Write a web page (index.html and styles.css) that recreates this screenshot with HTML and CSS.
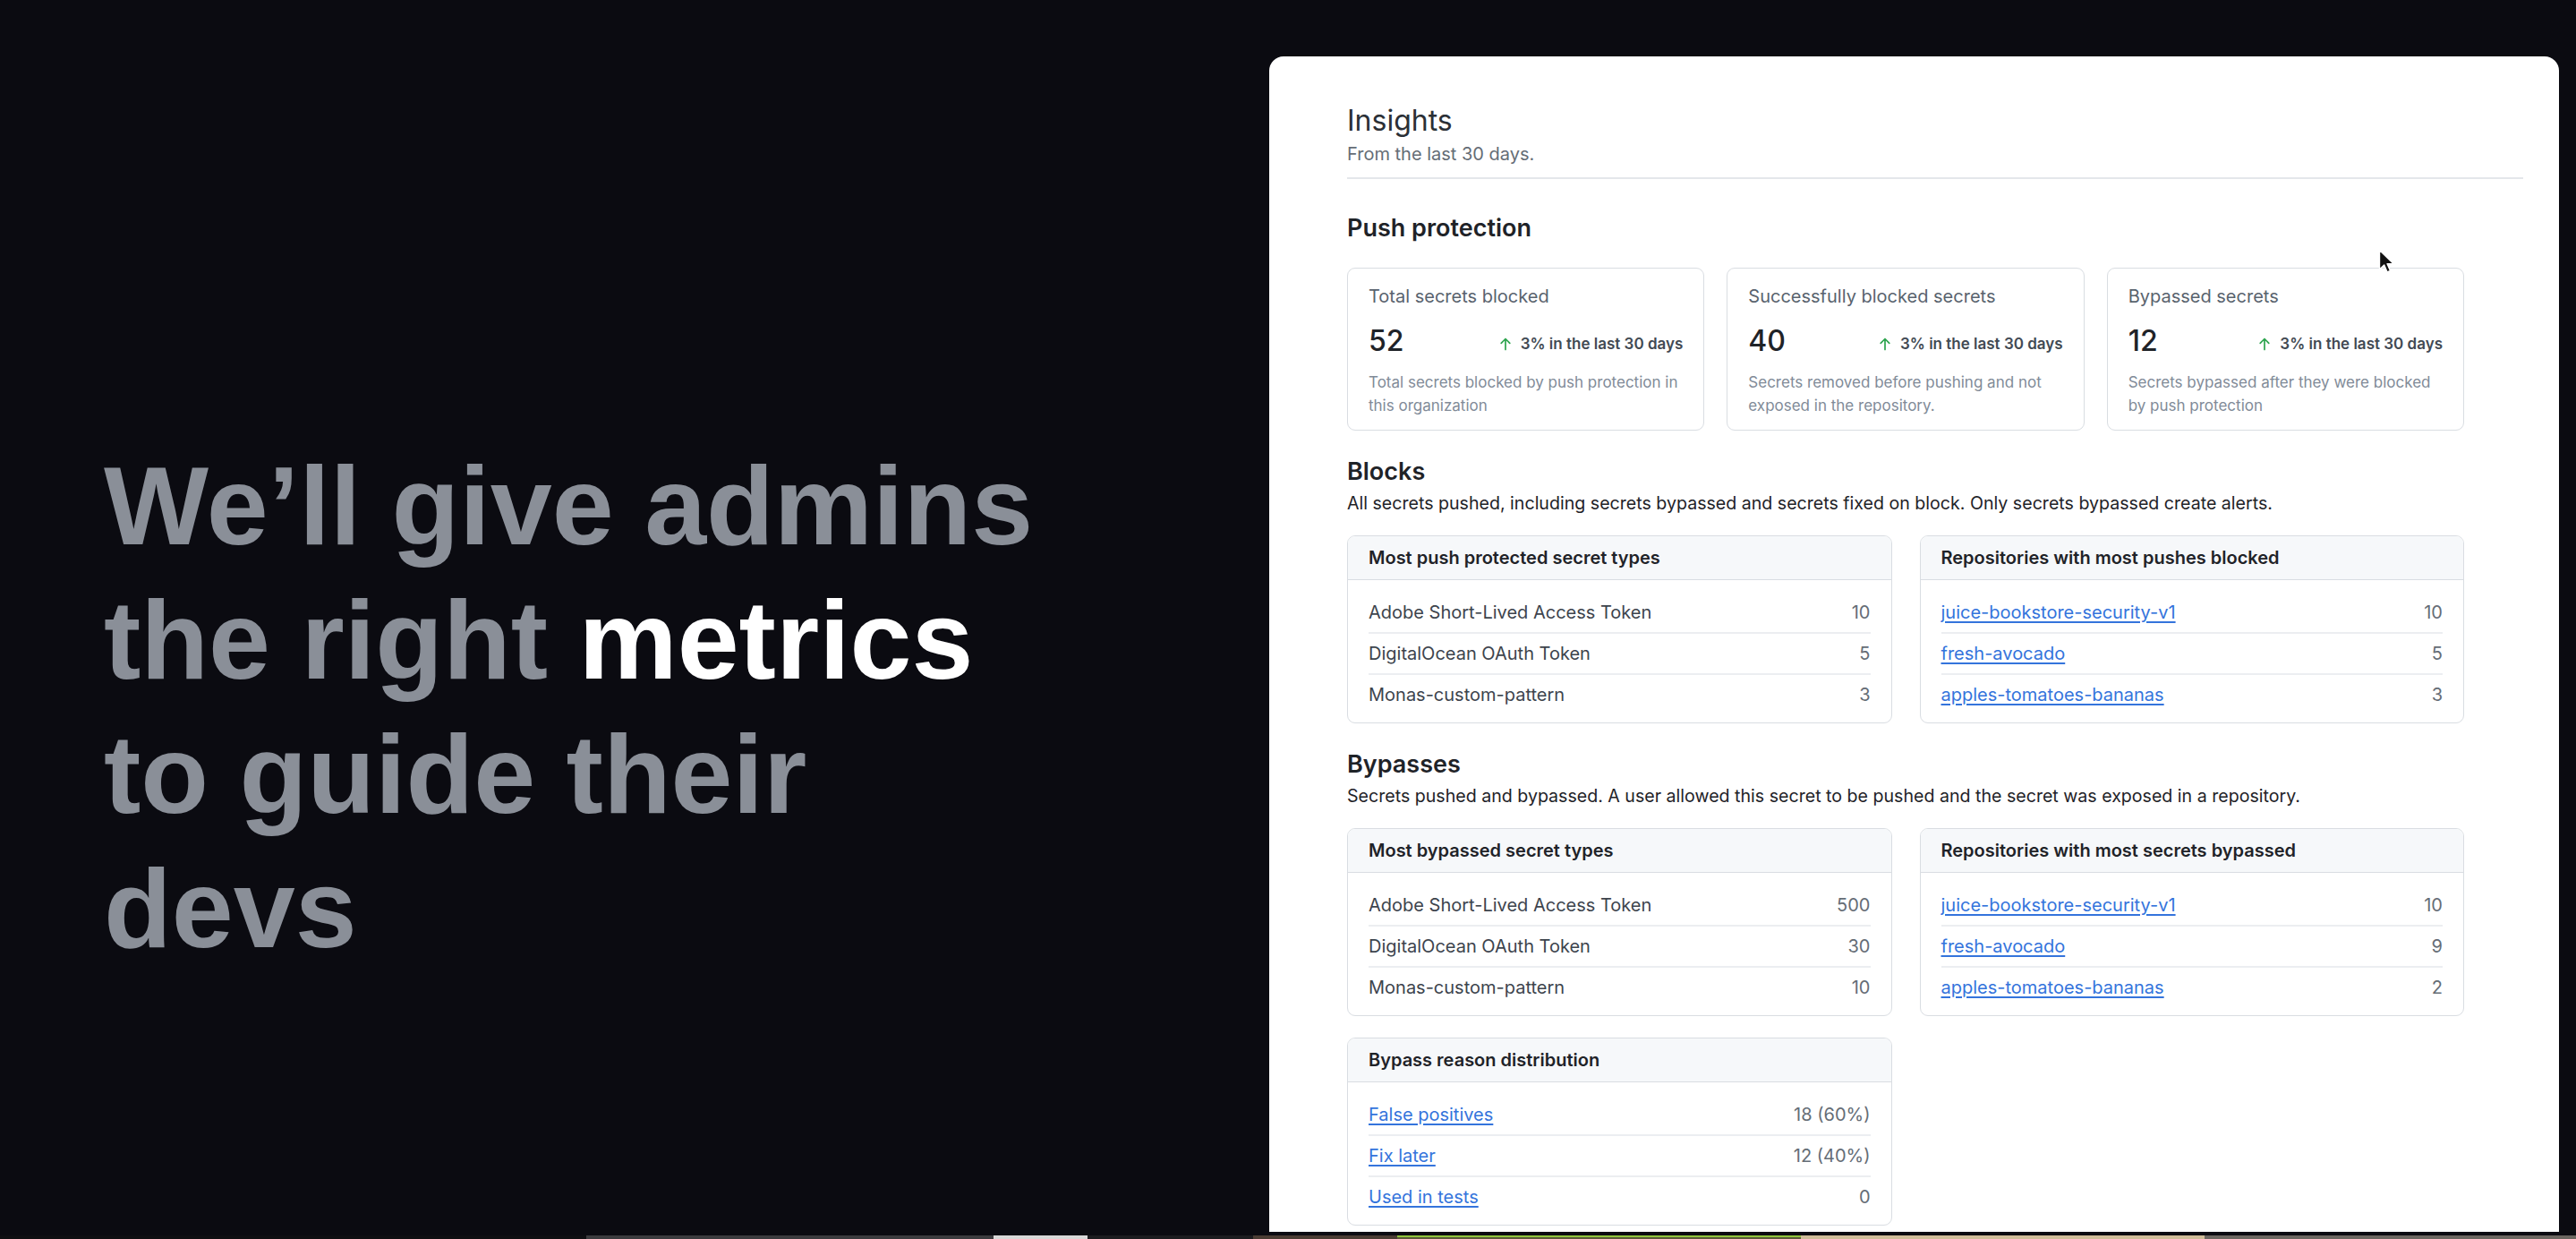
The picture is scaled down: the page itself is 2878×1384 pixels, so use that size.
FILE: index.html
```html
<!DOCTYPE html>
<html lang="en">
<head>
  <meta charset="UTF-8">
  <meta name="viewport" content="width=device-width, initial-scale=1.0">
  <title>Secret scanning insights</title>
  <link rel="stylesheet" href="styles.css">
</head>
<body>
  <div class="stage">
    <section class="pitch">
      <h1>We’ll give admins<br>the right <span class="hl">metrics</span><br>to guide their<br>devs</h1>
    </section>

    <main class="insights">
      <header class="subhead">
        <h2 class="subhead-title">Insights</h2>
        <p class="subhead-desc">From the last 30 days.</p>
      </header>

      <section class="block first">
        <h3 class="block-title">Push protection</h3>
        <div class="metric-grid">
          <div class="metric">
            <div class="metric-label">Total secrets blocked</div>
            <div class="metric-row">
              <span class="metric-num">52</span>
              <span class="trend"><svg viewBox="0 0 16 16" width="16" height="16"><path d="M8 14.5V2.6M3.2 7.4L8 2.5l4.8 4.9"/></svg>3% in the last 30 days</span>
            </div>
            <p class="metric-note">Total secrets blocked by push protection in this organization</p>
          </div>
          <div class="metric">
            <div class="metric-label">Successfully blocked secrets</div>
            <div class="metric-row">
              <span class="metric-num">40</span>
              <span class="trend"><svg viewBox="0 0 16 16" width="16" height="16"><path d="M8 14.5V2.6M3.2 7.4L8 2.5l4.8 4.9"/></svg>3% in the last 30 days</span>
            </div>
            <p class="metric-note">Secrets removed before pushing and not exposed in the repository.</p>
          </div>
          <div class="metric">
            <div class="metric-label">Bypassed secrets</div>
            <div class="metric-row">
              <span class="metric-num">12</span>
              <span class="trend"><svg viewBox="0 0 16 16" width="16" height="16"><path d="M8 14.5V2.6M3.2 7.4L8 2.5l4.8 4.9"/></svg>3% in the last 30 days</span>
            </div>
            <p class="metric-note">Secrets bypassed after they were blocked by push protection</p>
          </div>
        </div>
      </section>

      <section class="block">
        <h3 class="block-title">Blocks</h3>
        <p class="block-desc">All secrets pushed, including secrets bypassed and secrets fixed on block. Only secrets bypassed create alerts.</p>
        <div class="list-grid">
          <div class="list-box">
            <div class="list-head">Most push protected secret types</div>
            <ul class="list-body">
              <li><span>Adobe Short-Lived Access Token</span><span class="count">10</span></li>
              <li><span>DigitalOcean OAuth Token</span><span class="count">5</span></li>
              <li><span>Monas-custom-pattern</span><span class="count">3</span></li>
            </ul>
          </div>
          <div class="list-box">
            <div class="list-head">Repositories with most pushes blocked</div>
            <ul class="list-body">
              <li><a href="#">juice-bookstore-security-v1</a><span class="count">10</span></li>
              <li><a href="#">fresh-avocado</a><span class="count">5</span></li>
              <li><a href="#">apples-tomatoes-bananas</a><span class="count">3</span></li>
            </ul>
          </div>
        </div>
      </section>

      <section class="block">
        <h3 class="block-title">Bypasses</h3>
        <p class="block-desc">Secrets pushed and bypassed. A user allowed this secret to be pushed and the secret was exposed in a repository.</p>
        <div class="list-grid">
          <div class="list-box">
            <div class="list-head">Most bypassed secret types</div>
            <ul class="list-body">
              <li><span>Adobe Short-Lived Access Token</span><span class="count">500</span></li>
              <li><span>DigitalOcean OAuth Token</span><span class="count">30</span></li>
              <li><span>Monas-custom-pattern</span><span class="count">10</span></li>
            </ul>
          </div>
          <div class="list-box">
            <div class="list-head">Repositories with most secrets bypassed</div>
            <ul class="list-body">
              <li><a href="#">juice-bookstore-security-v1</a><span class="count">10</span></li>
              <li><a href="#">fresh-avocado</a><span class="count">9</span></li>
              <li><a href="#">apples-tomatoes-bananas</a><span class="count">2</span></li>
            </ul>
          </div>
          <div class="list-box">
            <div class="list-head">Bypass reason distribution</div>
            <ul class="list-body">
              <li><a href="#">False positives</a><span class="count">18 (60%)</span></li>
              <li><a href="#">Fix later</a><span class="count">12 (40%)</span></li>
              <li><a href="#">Used in tests</a><span class="count">0</span></li>
            </ul>
          </div>
        </div>
      </section>
    </main>
  </div>

  <div class="filmstrip">
    <span class="frame f1"></span>
    <span class="frame f2"></span>
    <span class="frame f3"></span>
    <span class="frame f4"></span>
    <span class="frame f5"></span>
    <span class="frame f6"></span>
    <span class="frame f7"></span>
    <span class="frame f8"></span>
  </div>

  <!-- mouse pointer over the panel -->
  <svg class="cursor" viewBox="0 0 18 28" width="18" height="28">
    <path d="M1.5 1.5v21.5l5.2-5 3.4 8 3.4-1.5-3.4-7.8h7.2z" fill="#111" stroke="#fff" stroke-width="1.4" stroke-linejoin="round"/>
  </svg>
</body>
</html>
```

FILE: styles.css
```css
:root {
  --bg: #0b0b11;
  --ink: #1f2328;
  --muted: #59636e;
  --faint: #818b98;
  --line: #d9dde2;
  --link: #3474dc;
}
* {
  box-sizing: border-box;
}
body {
  margin: 0;
  height: 1384px;
  overflow: hidden;
  background: var(--bg);
  font-family: Inter, 'Noto Sans', sans-serif;
  color: var(--ink);
}
.stage {
  display: flex;
  height: 1380px;
}

/* left headline */
.pitch {
  flex: 0 0 1418px;
  padding: 490px 0 0 116px;
}
.pitch h1 {
  margin: 0;
  font-family: 'Liberation Sans', Arial, sans-serif;
  font-weight: 700;
  font-size: 124px;
  line-height: 150px;
  color: #8a8f98;
}
.pitch .hl {
  color: #fff;
}

/* insights panel */
.insights {
  flex: 0 0 1441px;
  margin-top: 63px;
  height: 1313px;
  overflow: hidden;
  background: #fff;
  border-radius: 16px 16px 0 0;
  padding: 52px 40px 0 87px;
}
.subhead {
  padding-bottom: 12px;
  border-bottom: 2px solid #e4e7eb;
}
.subhead-title {
  margin: 0;
  font-size: 32px;
  line-height: 40px;
  font-weight: 400;
  color: #2b3036;
}
.subhead-desc {
  margin: 3px 0 0;
  font-size: 20px;
  line-height: 28px;
  color: #656d76;
}
.block {
  max-width: 1248px;
  margin-top: 29px;
}
.block.first {
  margin-top: 38px;
}
.block-title {
  margin: 0;
  font-size: 27px;
  line-height: 34px;
  font-weight: 600;
  color: var(--ink);
}
.block-desc {
  margin: 4px 0 0;
  font-size: 19.6px;
  line-height: 28px;
  color: var(--ink);
}

/* metric cards */
.metric-grid {
  display: grid;
  grid-template-columns: repeat(3, 1fr);
  gap: 25px;
  margin-top: 27px;
}
.metric {
  border: 1px solid var(--line);
  border-radius: 9px;
  padding: 17px 23px 14px;
}
.metric-label {
  font-size: 20px;
  line-height: 28px;
  color: var(--muted);
}
.metric-row {
  display: flex;
  justify-content: space-between;
  align-items: baseline;
  margin-top: 16px;
}
.metric-num {
  font-size: 32px;
  line-height: 40px;
  font-weight: 500;
  color: var(--ink);
}
.trend {
  display: flex;
  align-items: center;
  gap: 9px;
  font-size: 17px;
  font-weight: 600;
  color: #424a53;
}
.trend svg {
  fill: none;
  stroke: #2da44e;
  stroke-width: 1.7;
  stroke-linecap: round;
  stroke-linejoin: round;
}
.metric-note {
  margin: 13px 0 0;
  font-size: 17px;
  line-height: 26px;
  color: var(--faint);
}

/* list boxes */
.list-grid {
  display: grid;
  grid-template-columns: 1fr 1fr;
  gap: 24px 31px;
  margin-top: 22px;
}
.list-box {
  border: 1px solid var(--line);
  border-radius: 9px;
  overflow: hidden;
}
.list-head {
  background: #f6f8fa;
  border-bottom: 1px solid var(--line);
  padding: 10px 23px;
  font-size: 20px;
  line-height: 28px;
  font-weight: 600;
  color: var(--ink);
}
.list-body {
  list-style: none;
  margin: 0;
  padding: 14px 23px 9px;
}
.list-body li {
  display: flex;
  justify-content: space-between;
  padding: 8px 0;
  font-size: 20px;
  line-height: 28px;
  color: #3d444d;
  border-bottom: 2px solid #eceef1;
}
.list-body li:last-child {
  border-bottom: none;
}
.list-body a {
  color: var(--link);
  text-decoration: underline;
  text-underline-offset: 3px;
  text-decoration-thickness: 1.5px;
}
.count {
  color: #656d76;
}

/* strip of thumbnails along the bottom edge */
.filmstrip {
  display: flex;
  height: 4px;
}
.frame {
  display: block;
  height: 4px;
}
.f1 { width: 655px; background: #0f0f12; }
.f2 { width: 455px; background: #3b3b3e; }
.f3 { width: 105px; background: #d8d8d8; }
.f4 { width: 185px; background: #1c1c1f; }
.f5 { width: 161px; background: #4a3c33; }
.f6 { width: 451px; background: #5c5a3a; border-top: 2px solid #8fc43c; }
.f7 { width: 451px; background: #cfbc98; }
.f8 { width: 415px; background: #6b6660; }

.cursor {
  position: absolute;
  left: 2657px;
  top: 278px;
}
```
